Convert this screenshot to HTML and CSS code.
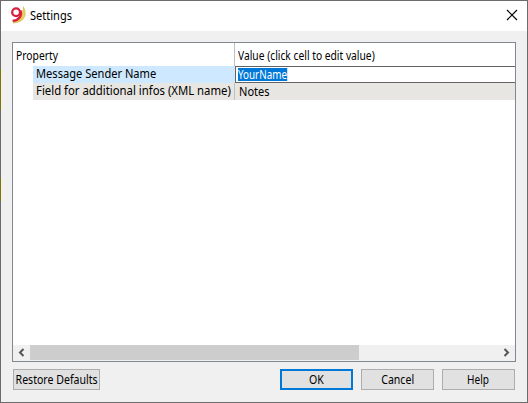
FILE: index.html
```html
<!DOCTYPE html>
<html lang="en">
<head>
<meta charset="utf-8">
<title>Settings</title>
<link rel="stylesheet" href="styles.css">
</head>
<body>
<div class="window">
  <header class="titlebar">
    <svg class="logo" width="16" height="18" viewBox="0 0 16 18"><path d="M13.6 2C16.5 7 15.5 15.8 3 16.8C8 15.5 13.2 11 13.6 2Z" fill="#f1d75e" stroke="#dfc45a" stroke-width="1.3"/><ellipse cx="6.1" cy="6.2" rx="3.9" ry="3.9" fill="#fff" stroke="#d9213f" stroke-width="2.3"/><path d="M10.6 4.5C12.2 9.5 9 14.6 2.6 14.9" fill="none" stroke="#d9213f" stroke-width="2.3"/></svg>
    <h1 class="title"><span class="t-settings">Settings</span></h1>
    <svg class="close" width="12" height="12" viewBox="0 0 12 12"><path d="M1 1L11 11M11 1L1 11" stroke="#000" stroke-width="1.2"/></svg>
  </header>
  <main class="content">
    <section class="panel">
      <div class="grid">
        <div class="head name"><span class="t-property">Property</span></div>
        <div class="head value"><span class="t-value">Value (click cell to edit value)</span></div>
        <div class="cell name selected"><span class="t-sender">Message Sender Name</span></div>
        <div class="editor"><span class="selection t-your">YourName</span></div>
        <div class="cell name shaded"><span class="t-field">Field for additional infos (XML name)</span></div>
        <div class="cell value shaded"><span class="t-notes">Notes</span></div>
      </div>
      <div class="scrollbar">
        <svg width="17" height="15" viewBox="0 0 17 15"><path d="M10.5 4L7 7.5L10.5 11" fill="none" stroke="#555" stroke-width="2"/></svg>
        <div class="thumb"></div>
        <svg class="right" width="17" height="15" viewBox="0 0 17 15"><path d="M6.5 4L10 7.5L6.5 11" fill="none" stroke="#555" stroke-width="2"/></svg>
      </div>
    </section>
    <footer class="buttons">
      <button class="btn restore"><span class="t-restore">Restore Defaults</span></button>
      <button class="btn primary"><span class="t-ok">OK</span></button>
      <button class="btn"><span class="t-cancel">Cancel</span></button>
      <button class="btn"><span class="t-help">Help</span></button>
    </footer>
  </main>
</div>
</body>
</html>
```
FILE: styles.css
```css
* { box-sizing: border-box; }
body { margin: 0; font: 12px/16px "Noto Sans", "Open Sans", sans-serif; color: #000; }
span { display: block; white-space: nowrap; flex: none; transform-origin: left center; }
.window {
  width: 528px; height: 403px; padding: 1px; display: flex; flex-direction: column;
  background: linear-gradient(#6c6c6c 69px, #7b7600 69px 110px, #6c6c6c 110px 178px, #7b7600 178px 201px, #6c6c6c 201px) left / 1px 100% no-repeat, #6c6c6c;
}
.titlebar { height: 30px; background: #fff; display: flex; align-items: center; padding: 0 9px 0 9px; }
.logo { margin-top: -2px; }
.title { margin: 0 auto 0 4px; font: inherit; }
.close { margin-right: 0; margin-top: -2px; }
.content { flex: 1; background: #f0f0f0; padding: 11px 11px 0; }
.panel {
  width: 504px; height: 320px; border: 1px solid #828790; background: #fff;
  display: flex; flex-direction: column; justify-content: space-between;
}
.grid { display: grid; grid-template-columns: 222px 1fr; grid-template-rows: 23px 17px 17px; }
.head, .cell { display: flex; align-items: center; min-width: 0; }
.head { padding-top: 2px; }
.name { border-right: 1px solid #c0c0c0; }
.head.name { padding-left: 3px; }
.head.value { padding-left: 3px; }
.cell.value { padding-left: 4px; }
.cell.name { margin-left: 20px; padding-left: 3px; }
.selected { background: #cde8ff; border-right-color: #cde8ff; }
.shaded { background: #e8e6e2; }
.cell.name.shaded, .cell.name.selected { padding-bottom: 1px; }
.editor { border: 1px solid #646464; border-right: 0; padding-left: 2px; display: flex; align-items: center; }
.selection { background: #0078d7; color: #fff; height: 13px; line-height: 13px; }
.scrollbar { height: 16px; background: #f0f0f0; display: flex; padding-bottom: 1px; }
.thumb { width: 329px; background: #cdcdcd; }
.right { margin-left: auto; }
.buttons { display: flex; gap: 8px; padding-top: 7px; padding-left: 1px; }
.btn {
  width: 73px; height: 21px; padding: 0; border: 1px solid #adadad; background: #e1e1e1;
  font: inherit; color: #000; display: flex; align-items: center; justify-content: center;
}
.btn span { transform-origin: center; }
.restore { width: 87px; margin-right: 172px; }
.primary { border: 2px solid #0078d7; }

/* Condensed label widths */
.t-settings { transform: scaleX(.92); }
.t-property { transform: scaleX(.86); }
.t-value { transform: scaleX(.855); }
.t-sender { transform: scaleX(.925); }
.t-field { transform: scaleX(.945); }
.t-your { transform: scaleX(.82); }
.t-notes { transform: scaleX(.92); }
.t-restore, .t-ok, .t-cancel { transform: scaleX(.88); }
.t-help { transform: scaleX(.84); }
```
